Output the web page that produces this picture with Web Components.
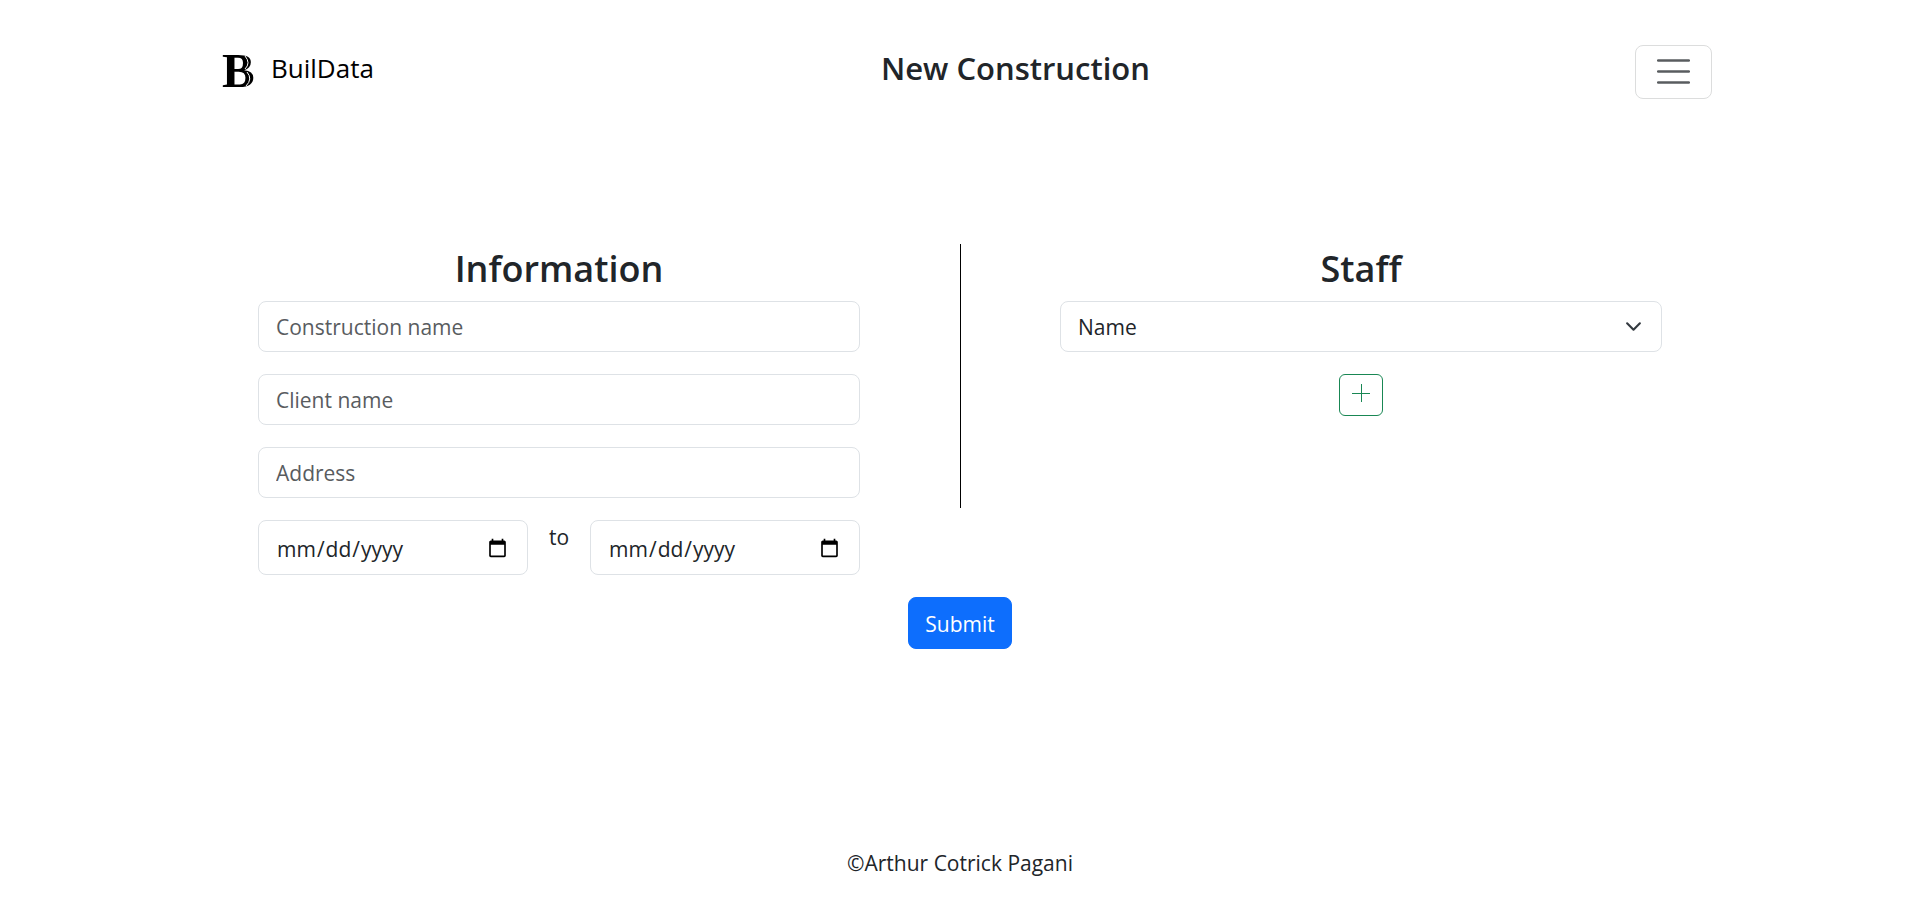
<!DOCTYPE html>
<html lang="en">
<head>
<meta charset="utf-8">
<meta name="viewport" content="width=device-width, initial-scale=1">
<title>New Construction</title>
<style>
  html, body { margin: 0; min-height: 100%; background: #fff; }
  body { font: 400 21px/34px "Open Sans", "Noto Sans", sans-serif; color: #212529; }
</style>
</head>
<body>
<construction-page></construction-page>

<script>
const define = (name, markup, setup) => {
  const template = document.createElement('template');
  template.innerHTML = markup;
  customElements.define(name, class extends HTMLElement {
    constructor() {
      super();
      this.attachShadow({ mode: 'open' }).append(template.content.cloneNode(true));
    }
    connectedCallback() { if (setup) setup(this, this.shadowRoot); }
  });
};

define('brand-link', `
  <style>
    :host { display: block; margin-right: 22px; }
    a { display: flex; align-items: center; gap: 15px; color: #000; text-decoration: none; font-size: 26px; line-height: 40px; }
    span { padding-bottom: 8px; }
    svg { display: block; width: 50px; height: 60px; overflow: visible; }
    text { font: 700 49px "Liberation Serif", serif; }
  </style>
  <a href="#">
    <svg viewBox="0 0 50 60" aria-hidden="true">
      <text x="16" y="45">B</text>
      <path d="M39 14Q45 21 39 27M41 30Q47 37 40 44" fill="none" stroke="#fff" stroke-width="1"/>
    </svg>
    <span><slot></slot></span>
  </a>`);

define('menu-toggle', `
  <style>
    :host { display: block; }
    button { display: flex; align-items: center; justify-content: center; width: 77px; height: 54px; padding: 0 0 2px;
      background: transparent; border: 1px solid #dcdddd; border-radius: 8px; cursor: pointer; }
    svg { display: block; width: 33px; height: 33px; }
  </style>
  <button type="button" aria-label="Toggle navigation">
    <svg viewBox="0 0 30 30" aria-hidden="true">
      <path d="M1 5h28M1 15h28M1 25h28" fill="none" stroke="rgba(33,37,41,.75)" stroke-width="2.2" stroke-linecap="round"/>
    </svg>
  </button>`);

define('page-header', `
  <style>
    :host { display: flex; justify-content: space-between; align-items: center; width: 100%; max-width: 1506px; margin: 0 auto; padding: 42px 0 0; }
    h1 { margin: 0; padding-bottom: 8px; font-size: 31px; line-height: 40px; font-weight: 600; }
  </style>
  <brand-link>BuilData</brand-link>
  <h1><slot></slot></h1>
  <menu-toggle></menu-toggle>`);

define('form-section', `
  <style>
    :host { display: flex; flex-direction: column; gap: 22px; min-width: 0; }
    h2 { margin: 0 0 -17px; font-size: 36px; line-height: 54px; font-weight: 600; text-align: center; }
  </style>
  <h2></h2>
  <slot></slot>`,
  (host, root) => { root.querySelector('h2').textContent = host.getAttribute('heading'); });

define('text-field', `
  <style>
    :host { display: block; }
    input { display: block; box-sizing: border-box; width: 100%; height: 51px; padding: 8px 17px; font: inherit; color: inherit;
      background: #fff; border: 1px solid #dee2e6; border-radius: 8px; outline: none; }
    input[type="date"] { height: 55px; padding-top: 10px; }
    input::placeholder { color: #595c5f; opacity: 1; }
  </style>
  <input>`,
  (host, root) => {
    const input = root.querySelector('input');
    const label = host.getAttribute('label');
    input.type = host.getAttribute('type') || 'text';
    input.setAttribute('aria-label', label);
    if (input.type === 'text') input.placeholder = label;
  });

define('date-range', `
  <style>
    :host { display: grid; grid-template-columns: 1fr auto 1fr; gap: 21px; }
  </style>
  <text-field type="date" label="Start date"></text-field>
  <span>to</span>
  <text-field type="date" label="End date"></text-field>`);

define('select-field', `
  <style>
    :host { display: grid; align-items: center; }
    select, svg { grid-area: 1 / 1; }
    select { appearance: none; box-sizing: border-box; width: 100%; height: 51px; padding: 8px 50px 8px 17px; font: inherit; color: inherit;
      background: #fff; border: 1px solid #dee2e6; border-radius: 8px; outline: none; }
    svg { justify-self: end; width: 17px; height: 17px; margin-right: 20px; pointer-events: none; }
  </style>
  <select aria-label="Name"><option>Name</option></select>
  <svg viewBox="0 0 16 16" aria-hidden="true">
    <path d="m2 5 6 6 6-6" fill="none" stroke="#343a40" stroke-width="2" stroke-linecap="round" stroke-linejoin="round"/>
  </svg>`);

define('add-button', `
  <style>
    :host { display: block; align-self: center; }
    button { display: flex; justify-content: center; width: 44px; height: 42px; padding: 8px 0 0; background: transparent;
      border: 1px solid #198754; border-radius: 6px; cursor: pointer; }
    svg { display: block; width: 20px; height: 20px; }
  </style>
  <button type="button" aria-label="Add staff member">
    <svg viewBox="0 0 20 20" aria-hidden="true">
      <path d="M1 10.5h18M10.5 1v18" fill="none" stroke="#198754" stroke-width="1"/>
    </svg>
  </button>`);

define('submit-button', `
  <style>
    :host { display: block; }
    button { height: 52px; padding: 1px 16px 0; font: inherit; color: #fff; background: #0d6efd; border: 1px solid #0d6efd;
      border-radius: 8px; cursor: pointer; }
  </style>
  <button type="submit"><slot></slot></button>`);

define('construction-form', `
  <style>
    :host { display: block; max-width: 1404px; margin: 0 auto; }
    .columns { display: grid; grid-template-columns: 1fr 200px 1fr; }
    .divider { justify-self: center; width: 1px; height: 264px; margin-top: 2px; background: #000; }
    .actions { display: flex; justify-content: center; margin-top: 22px; }
  </style>
  <form>
    <div class="columns">
      <form-section heading="Information">
        <text-field label="Construction name"></text-field>
        <text-field label="Client name"></text-field>
        <text-field label="Address"></text-field>
        <date-range></date-range>
      </form-section>
      <div class="divider"></div>
      <form-section heading="Staff">
        <select-field></select-field>
        <add-button></add-button>
      </form-section>
    </div>
    <div class="actions"><submit-button>Submit</submit-button></div>
  </form>`);

define('page-footer', `
  <style>
    :host { display: block; padding: 0 0 39px 2px; text-align: center; }
  </style>
  <slot></slot>`);

define('construction-page', `
  <style>
    :host { display: flex; flex-direction: column; box-sizing: border-box; min-height: 100vh; }
    main { flex: 1; padding: 140px 0 64px 2px; }
  </style>
  <page-header>New Construction</page-header>
  <main><construction-form></construction-form></main>
  <page-footer>©Arthur Cotrick Pagani</page-footer>`);
</script>
</body>
</html>
